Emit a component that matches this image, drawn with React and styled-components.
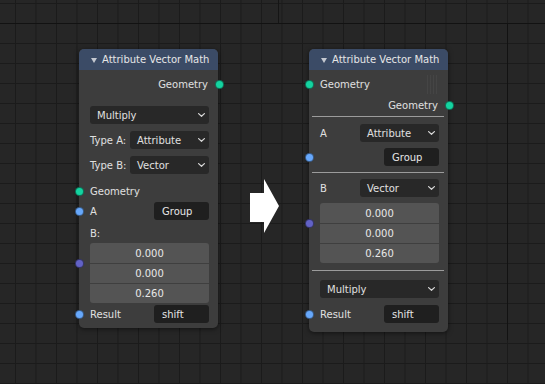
import React from 'react';
import styled, { createGlobalStyle } from 'styled-components';

const GlobalStyle = createGlobalStyle`
    html, body {
        margin : 0;
        padding : 0;
    }
    body {
        width : 545px;
        height : 384px;
        overflow : hidden;
        background : #262626;
        font-family : "DejaVu Sans", "Liberation Sans", sans-serif;
    }
`;

const SOCKET = {
    geo: '#14d3a0',
    attr: '#67a8fb',
    vec: '#6262c6',
};

const Chevron = () => (
    <svg width="7" height="4" viewBox="0 0 7 4">
        <path d="M0.6 0.6 L3.5 3.3 L6.4 0.6" fill="none" stroke="#d8d8d8" strokeWidth="1.2" strokeLinecap="round" strokeLinejoin="round" />
    </svg>
);

const Arrow = () => (
    <svg width="29" height="54" viewBox="0 0 29 54">
        <polygon points="0,14 14,14 14,0 29,27 14,54 14,43 0,43" fill="#ffffff" />
    </svg>
);

const NodeHeader = ({ title }) => (
    <Header>
        <Collapse />
        <Title>{title}</Title>
    </Header>
);

const Dropdown = ({ value, width }) => (
    <Select $w={width}>
        <span>{value}</span>
        <Chevron />
    </Select>
);

const Vector = ({ values }) => (
    <VectorBlock>
        {values.map((v, i) => <VecCell key={i}>{v}</VecCell>)}
    </VectorBlock>
);

const App = () => {
    const vec = ['0.000', '0.000', '0.260'];

    return (
        <>
            <GlobalStyle />
            <Canvas>
                <Node $pb={5}>
                    <NodeHeader title="Attribute Vector Math" />
                    <Body>
                        <Row $end>
                            <Label>Geometry</Label>
                            <Socket $right $c={SOCKET.geo} />
                        </Row>
                        <Row $h={18} $mt={12}>
                            <Dropdown value="Multiply" />
                        </Row>
                        <Row $h={18} $mt={7}>
                            <Label>Type A:</Label>
                            <Dropdown value="Attribute" width={79} />
                        </Row>
                        <Row $h={18} $mt={7}>
                            <Label>Type B:</Label>
                            <Dropdown value="Vector" width={79} />
                        </Row>
                        <Row $mt={7}>
                            <Socket $c={SOCKET.geo} />
                            <Label>Geometry</Label>
                        </Row>
                        <Row $h={18} $mt={1}>
                            <Socket $c={SOCKET.attr} />
                            <Label>A</Label>
                            <Field>Group</Field>
                        </Row>
                        <Row $h={16} $mt={5}>
                            <Label>B:</Label>
                        </Row>
                        <Row $h={60} $mt={2}>
                            <Socket $c={SOCKET.vec} $top={20} />
                            <Vector values={vec} />
                        </Row>
                        <Row $h={18} $mt={2}>
                            <Socket $c={SOCKET.attr} />
                            <Label>Result</Label>
                            <Field>shift</Field>
                        </Row>
                    </Body>
                </Node>

                <ArrowWrap>
                    <Arrow />
                </ArrowWrap>

                <Node $pb={9}>
                    <NodeHeader title="Attribute Vector Math" />
                    <Body>
                        <Row>
                            <Socket $c={SOCKET.geo} />
                            <Label>Geometry</Label>
                            <Ghost />
                        </Row>
                        <Row $end $mt={1}>
                            <Label>Geometry</Label>
                            <Socket $right $c={SOCKET.geo} />
                        </Row>
                        <Divider $mt={1} />
                        <Row $h={18} $mt={7}>
                            <Label>A</Label>
                            <Dropdown value="Attribute" width={79} />
                        </Row>
                        <Row $h={18} $mt={6}>
                            <Socket $c={SOCKET.attr} />
                            <Field>Group</Field>
                        </Row>
                        <Divider $mt={6} />
                        <Row $h={18} $mt={6}>
                            <Label>B</Label>
                            <Dropdown value="Vector" width={79} />
                        </Row>
                        <Row $h={60} $mt={6}>
                            <Socket $c={SOCKET.vec} $top={20} />
                            <Vector values={vec} />
                        </Row>
                        <Divider $mt={7} />
                        <Row $h={18} $mt={9}>
                            <Dropdown value="Multiply" />
                        </Row>
                        <Row $h={18} $mt={7}>
                            <Socket $c={SOCKET.attr} />
                            <Label>Result</Label>
                            <Field>shift</Field>
                        </Row>
                    </Body>
                </Node>
            </Canvas>
        </>
    );
};

const Canvas = styled.div`
    width : 545px;
    height : 384px;
    box-sizing : border-box;
    padding : 49px 0 0 79px;
    display : flex;
    align-items : flex-start;
    background :
        linear-gradient(#121212, #121212) 0 23px / 100% 1px no-repeat,
        linear-gradient(#121212, #121212) 507px 23px / 1px 317px no-repeat,
        linear-gradient(#151515, #151515) 278px 0 / 1px 23px no-repeat,
        linear-gradient(90deg, #1b1b1b 1px, transparent 1px) 15px 3px / 20.5px 20px,
        linear-gradient(#1b1b1b 1px, transparent 1px) 15px 3px / 20.5px 20px,
        #262626;
`;

const Node = styled.div`
    width : 139px;
    flex : 0 0 139px;
    padding-bottom : ${p => p.$pb}px;
    background : #3d3d3d;
    border-radius : 5px;
    box-shadow : 0 1px 5px rgba(0, 0, 0, 0.55);
    color : #e0e0e0;
    font-size : 10px;
`;

const Header = styled.div`
    height : 21px;
    display : flex;
    align-items : center;
    background : #3b4b66;
    border-radius : 5px 5px 0 0;
`;

const Collapse = styled.span`
    width : 0;
    height : 0;
    margin : 1px 5px 0 12px;
    border-left : 3px solid transparent;
    border-right : 3px solid transparent;
    border-top : 5px solid #c4c8d0;
`;

const Title = styled.span`
    font-size : 10px;
    color : #e6e6e6;
    white-space : nowrap;
`;

const Body = styled.div`
    display : flex;
    flex-direction : column;
    padding-top : 4px;
`;

const Row = styled.div`
    position : relative;
    display : flex;
    align-items : center;
    justify-content : ${p => p.$end ? 'flex-end' : 'flex-start'};
    height : ${p => p.$h || 20}px;
    margin-top : ${p => p.$mt || 0}px;
    padding : ${p => p.$end ? '0 10px 0 11px' : '0 9px 0 11px'};
`;

const Label = styled.span`
    color : #e0e0e0;
    white-space : nowrap;
`;

const Socket = styled.span`
    position : absolute;
    top : ${p => p.$top != null ? `${p.$top}px` : '50%'};
    ${p => p.$right ? 'right : -6px;' : 'left : -4px;'}
    width : 9px;
    height : 9px;
    margin-top : -4.5px;
    box-sizing : border-box;
    border-radius : 50%;
    border : 1px solid rgba(0, 0, 0, 0.45);
    background : ${p => p.$c};
`;

const Select = styled.div`
    box-sizing : border-box;
    height : 18px;
    ${p => p.$w ? `width : ${p.$w}px; margin-left : auto;` : 'flex : 1;'}
    display : flex;
    align-items : center;
    justify-content : space-between;
    padding : 0 4px 0 7px;
    background : #282828;
    border-radius : 3px;
    color : #e0e0e0;
`;

const Field = styled.div`
    box-sizing : border-box;
    width : 55px;
    height : 18px;
    margin-left : auto;
    display : flex;
    align-items : center;
    padding-left : 8px;
    background : #1f1f1f;
    border-radius : 3px;
    color : #e6e6e6;
`;

const VectorBlock = styled.div`
    flex : 1;
    display : flex;
    flex-direction : column;
    border-radius : 3px;
    overflow : hidden;
`;

const VecCell = styled.div`
    height : 20px;
    display : flex;
    align-items : center;
    justify-content : center;
    background : #545454;
    color : #e8e8e8;
    & + & {
        border-top : 1px solid #3f3f3f;
        height : 19px;
    }
`;

const Divider = styled.div`
    height : 1px;
    margin : ${p => p.$mt}px 4px 0 3px;
    background : #9c9c9c;
`;

const Ghost = styled.span`
    margin-left : auto;
    margin-right : 1px;
    width : 11px;
    height : 19px;
    background : repeating-linear-gradient(90deg, #4a4a4a 0 1px, transparent 1px 3px);
    opacity : 0.6;
`;

const ArrowWrap = styled.div`
    display : flex;
    margin : 130px 30px 0 32px;
`;

export default App;
